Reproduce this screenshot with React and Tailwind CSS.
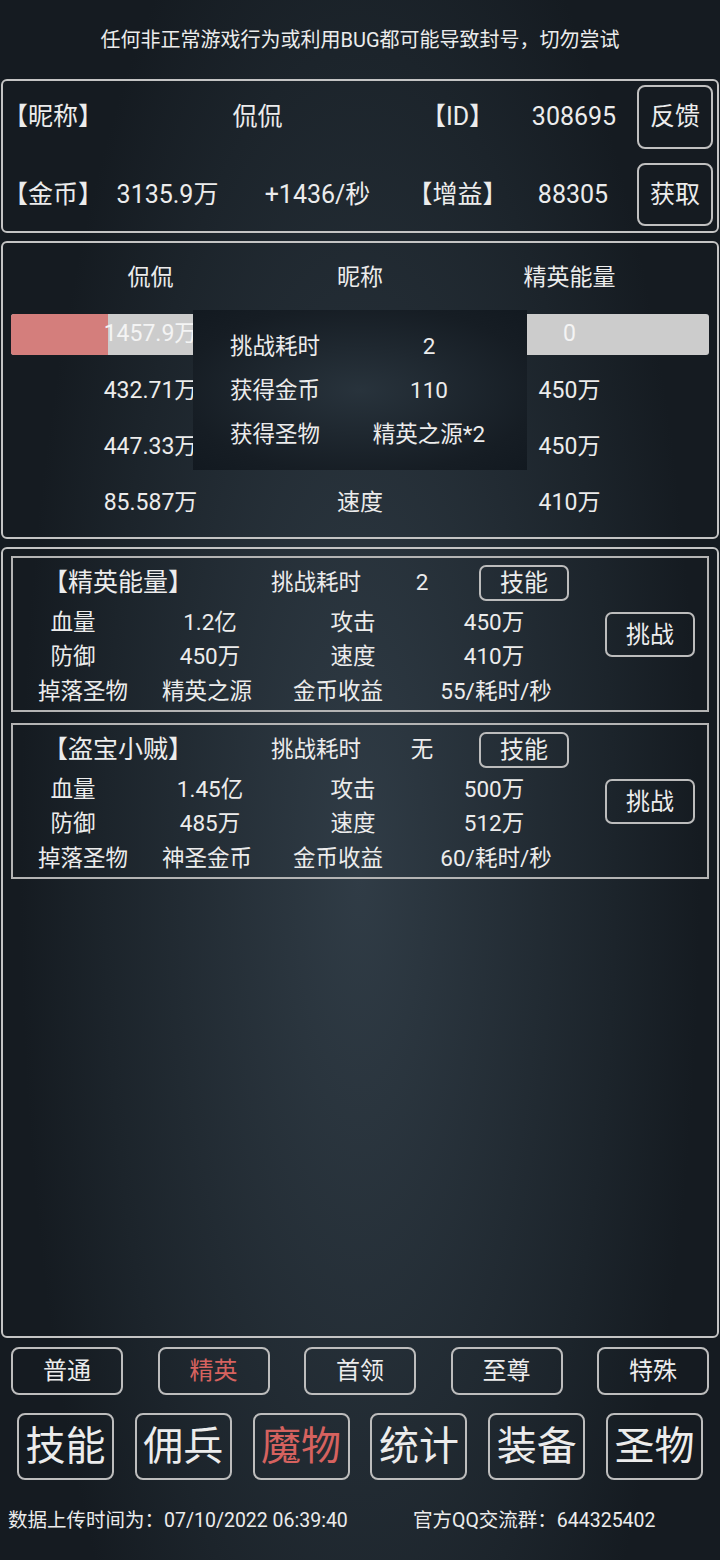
import React from "react";

const txt = "text-[#ececec]";

function StatLine({ cells }) {
  // cells: [label, value, label, value] with optional per-cell padding classes
  return (
    <div className="flex items-center h-[34px]">
      <div className={`w-[130px] text-center ${cells[0][1] || ""}`}>{cells[0][0]}</div>
      <div className="w-[134px] text-center">{cells[1]}</div>
      <div className={`w-[138px] text-center ${cells[2][1] || ""}`}>{cells[2][0]}</div>
      <div className="w-[158px] text-center">{cells[3]}</div>
    </div>
  );
}

function MonsterCard({ name, time, hp, atk, def, spd, drop, income }) {
  return (
    <div className="flex border-2 border-[#b4b4b4] h-[156px]">
      <div className="flex flex-col pt-[5px] text-[22.5px]">
        <div className="flex items-center h-[40px]">
          <div className="ml-[30px] w-[228px] text-[25px]">【{name}】</div>
          <div className="w-[100px]">挑战耗时</div>
          <div className="w-[102px] text-center">{time}</div>
          <button className="ml-[6px] w-[90px] h-[36px] border-2 border-[#bcbcbc] rounded-[7px] text-[24px] leading-none">
            技能
          </button>
        </div>
        <div className="h-[3px]" />
        <StatLine cells={[["血量", "pr-[10px]"], hp, ["攻击", "pl-[14px]"], atk]} />
        <StatLine cells={[["防御", "pr-[10px]"], def, ["速度", "pl-[14px]"], spd]} />
        <div className="flex items-center h-[36px]">
          <div className="w-[130px] text-center pl-[10px]">掉落圣物</div>
          <div className="w-[134px] text-center pr-[6px]">{drop}</div>
          <div className="w-[138px] text-center pr-[16px]">金币收益</div>
          <div className="w-[158px] text-center pl-[4px]">{income}</div>
        </div>
      </div>
      <div className="ml-auto mr-[12px] mt-[54px]">
        <button className="w-[90px] h-[45px] border-2 border-[#bcbcbc] rounded-[7px] text-[24px] leading-none">
          挑战
        </button>
      </div>
    </div>
  );
}

export default function App() {
  return (
    <div
      className={`w-[720px] h-[1560px] overflow-hidden ${txt} font-['Roboto','Noto_Sans_CJK_SC',sans-serif] bg-[radial-gradient(ellipse_340px_1100px_at_50%_56%,#303c46_0%,#1c242b_75%,#151b21_100%)]`}
    >
      {/* warning */}
      <div className="h-[79px] flex items-center justify-center text-[20px]">
        任何非正常游戏行为或利用BUG都可能导致封号，切勿尝试
      </div>

      {/* player panel */}
      <div className="mx-[1px] border-2 border-[#c4c4c4] rounded-[6px] pt-[4px] pb-[5px] pr-[4px] flex flex-col gap-[14px] text-[25px]">
        <div className="flex items-center h-[64px]">
          <div className="w-[97px]">【昵称】</div>
          <div className="w-[315px] text-center">侃侃</div>
          <div className="w-[85px] text-center">【ID】</div>
          <div className="w-[137px] text-center pl-[11px]">308695</div>
          <button className="ml-auto w-[76px] h-[64px] border-2 border-[#c0c0c0] rounded-[8px] text-[25px]">
            反馈
          </button>
        </div>
        <div className="flex items-center h-[63px]">
          <div className="w-[97px]">【金币】</div>
          <div className="w-[135px] text-center">3135.9万</div>
          <div className="w-[165px] text-center">+1436/秒</div>
          <div className="w-[115px] text-center">【增益】</div>
          <div className="w-[116px] text-center">88305</div>
          <button className="ml-auto w-[76px] h-[63px] border-2 border-[#c0c0c0] rounded-[8px] text-[25px]">
            获取
          </button>
        </div>
      </div>

      {/* battle panel */}
      <div className="relative mt-[8px] mx-[1px] h-[298px] border-2 border-[#c4c4c4] rounded-[6px] px-[8px] text-[23px]">
        <div className="grid grid-cols-[279px_140px_279px] h-[71px] items-center text-center">
          <div>侃侃</div>
          <div>昵称</div>
          <div>精英能量</div>
        </div>
        <div className="grid grid-cols-[279px_140px_279px] h-[41px]">
          <div className="relative bg-[#cccccc] rounded-[3px] overflow-hidden flex items-center justify-center">
            <div className="absolute left-0 top-0 bottom-0 w-[97px] bg-[#d47e7c]" />
            <span className="relative text-[#f4f4f4]">1457.9万</span>
          </div>
          <div />
          <div className="bg-[#cccccc] rounded-[3px] flex items-center justify-center text-[#f4f4f4]">0</div>
        </div>
        <div className="h-[8px]" />
        {[
          ["432.71万", "", "450万"],
          ["447.33万", "", "450万"],
          ["85.587万", "速度", "410万"],
        ].map((r, i) => (
          <div key={i} className="grid grid-cols-[279px_140px_279px] h-[56px] items-center text-center">
            <div>{r[0]}</div>
            <div>{r[1]}</div>
            <div>{r[2]}</div>
          </div>
        ))}

        {/* result popup */}
        <div className="absolute left-[190px] top-[67px] w-[334px] h-[160px] bg-[radial-gradient(ellipse_at_center,#28333c_0%,#161d24_75%,#121920_100%)] pt-[15px] pl-[37px] text-[22.5px]">
          {[
            ["挑战耗时", "2"],
            ["获得金币", "110"],
            ["获得圣物", "精英之源*2"],
          ].map((r, i) => (
            <div key={i} className="flex items-center h-[44px]">
              <div className="w-[129px]">{r[0]}</div>
              <div className="w-[140px] text-center">{r[1]}</div>
            </div>
          ))}
        </div>
      </div>

      {/* monster list */}
      <div className="mt-[8px] mx-[1px] h-[791px] border-2 border-[#c4c4c4] rounded-[6px] px-[8px] pt-[7px] flex flex-col gap-[11px]">
        <MonsterCard
          name="精英能量"
          time="2"
          hp="1.2亿"
          atk="450万"
          def="450万"
          spd="410万"
          drop="精英之源"
          income="55/耗时/秒"
        />
        <MonsterCard
          name="盗宝小贼"
          time="无"
          hp="1.45亿"
          atk="500万"
          def="485万"
          spd="512万"
          drop="神圣金币"
          income="60/耗时/秒"
        />
      </div>

      {/* category tabs */}
      <div className="mt-[9px] px-[11px] flex justify-between text-[24px]">
        {["普通", "精英", "首领", "至尊", "特殊"].map((t) => (
          <button
            key={t}
            className={`w-[112px] h-[48px] border-2 border-[#bdbdbd] rounded-[8px] ${
              t === "精英" ? "text-[#d6625f]" : ""
            }`}
          >
            {t}
          </button>
        ))}
      </div>

      {/* main nav */}
      <div className="mt-[18px] px-[17px] flex justify-between text-[40px]">
        {["技能", "佣兵", "魔物", "统计", "装备", "圣物"].map((t) => (
          <button
            key={t}
            className={`w-[97px] h-[67px] border-2 border-[#bdbdbd] rounded-[8px] leading-none ${
              t === "魔物" ? "text-[#d6625f]" : ""
            }`}
          >
            {t}
          </button>
        ))}
      </div>

      {/* footer */}
      <div className="mt-[26px] flex items-center text-[19.5px] h-[30px]">
        <div className="ml-[8px] w-[405px]">数据上传时间为：07/10/2022 06:39:40</div>
        <div>官方QQ交流群：644325402</div>
      </div>
    </div>
  );
}
